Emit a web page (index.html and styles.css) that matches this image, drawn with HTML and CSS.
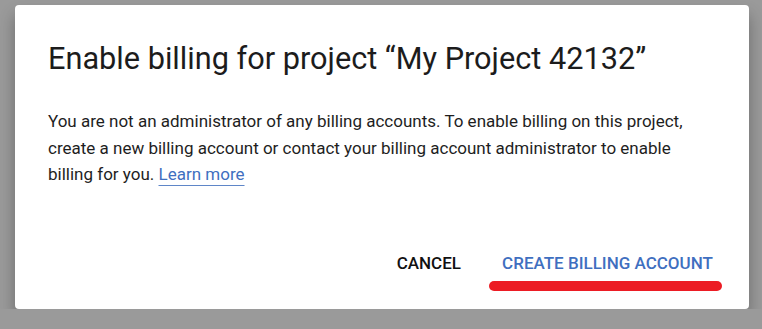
FILE: index.html
```html
<!DOCTYPE html>
<html lang="en">
<head>
  <meta charset="UTF-8" />
  <meta name="viewport" content="width=device-width, initial-scale=1.0"/>
  <title>Enable billing</title>
  <link rel="stylesheet" href="styles.css">
</head>
<body>
  <div class="dialog">
    <h1 class="dialog-title">Enable billing for project “My Project 42132”</h1>
    <p class="dialog-text">
      You are not an administrator of any billing accounts. To enable billing on this project,
      create a new billing account or contact your billing account administrator to enable
      billing for you. <a href="#" class="learn-more">Learn more</a>
    </p>
    <div class="dialog-actions">
      <button type="button" class="action-button">Cancel</button>
      <div class="action-wrap">
        <button type="button" class="action-button primary">Create billing account</button>
        <span class="highlight"></span>
      </div>
    </div>
  </div>
</body>
</html>
```

FILE: styles.css
```css
body {
    margin: 0;
    padding: 5px 13px 0 15px;
    background-color: #9a9a9a;
    font-family: Roboto, "Liberation Sans", sans-serif;
    color: #1f1f1f;
}

/* ダイアログ本体 */
.dialog {
    background-color: #fff;
    height: 304px;
    box-sizing: border-box;
    padding: 35px 33px 0 33px;
    border-radius: 4px;
    box-shadow: 0 10px 16px rgba(0, 0, 0, 0.3);
}

.dialog-title {
    margin: 0;
    font-size: 30.7px;
    font-weight: 400;
    line-height: 38px;
    color: #1c1c1c;
}

.dialog-text {
    margin: 30px 0 0 0;
    font-size: 17px;
    line-height: 26.5px;
    color: #1e1e1e;
}

.learn-more {
    color: #3f6fc0;
    text-decoration: underline;
    text-decoration-color: #5f86c8;
    text-decoration-thickness: 1px;
    text-underline-offset: 5px;
}

/* ボタン */
.dialog-actions {
    display: flex;
    justify-content: flex-end;
    align-items: flex-start;
    gap: 24px;
    margin: 61px -6px 0 0;
}

.action-wrap {
    display: flex;
    flex-direction: column;
    align-items: center;
}

.action-button {
    background: none;
    border: none;
    padding: 4px 8px;
    font-family: inherit;
    font-size: 17px;
    font-weight: 500;
    text-transform: uppercase;
    color: #111;
    cursor: pointer;
}

.action-button.primary {
    color: #3f6fc0;
}

.highlight {
    display: block;
    width: 233px;
    height: 10px;
    margin: 4px 0 0 -4px;
    border-radius: 5px;
    background-color: #ec1c24;
}
```
